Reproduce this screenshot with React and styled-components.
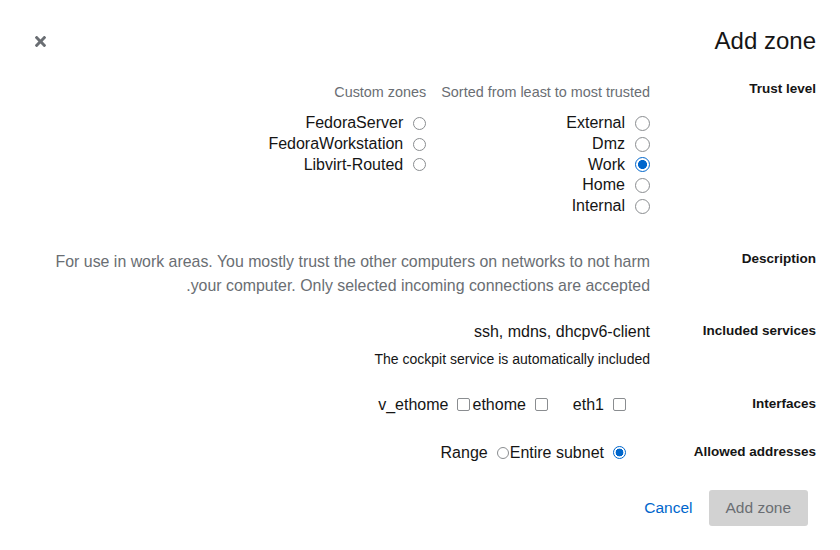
import React from 'react';
import styled, { createGlobalStyle } from 'styled-components';

const GlobalStyle = createGlobalStyle`
  body {
    margin: 0;
    background: #fff;
    font-family: "Liberation Sans", Arial, sans-serif;
    color: #151515;
  }
`;

const Dialog = styled.div`
  direction: rtl;
  width: 840px;
  height: 550px;
  box-sizing: border-box;
  padding: 24px 24px 0 24px;
  display: flex;
  flex-direction: column;
`;

const Header = styled.header`
  display: flex;
  justify-content: space-between;
  align-items: center;
  height: 34px;
`;

const Title = styled.h1`
  margin: 0;
  font-size: 24px;
  font-weight: 400;
  line-height: 34px;
`;

const Close = styled.button`
  border: 0;
  background: none;
  padding: 0;
  margin-left: 11px;
  width: 11px;
  height: 11px;
  display: flex;
  color: #6a6e73;
  cursor: pointer;
`;

const Row = styled.div`
  display: grid;
  grid-template-columns: 150px 1fr;
  column-gap: 16px;
  margin-top: ${p => p.$space}px;
`;

const Label = styled.div`
  font-size: 13.5px;
  font-weight: 700;
  line-height: 18px;
`;

const Content = styled.div`
  padding-top: ${p => p.$shift || 0}px;
`;

const Columns = styled.div`
  display: flex;
  gap: 15px;
`;

const Column = styled.div`
  display: flex;
  flex-direction: column;
`;

const ColumnHead = styled.div`
  font-size: 14.4px;
  line-height: 18px;
  color: #6a6e73;
  margin-bottom: 12px;
`;

const Option = styled.label`
  display: flex;
  align-items: center;
  gap: 10px;
  font-size: 16px;
  line-height: 20.75px;
`;

const Radio = styled.input.attrs({ type: 'radio' })`
  appearance: none;
  margin: 0;
  width: ${p => p.$size || 13}px;
  height: ${p => p.$size || 13}px;
  box-sizing: border-box;
  border-radius: 50%;
  border: 1px solid #8a8d90;
  background: #fff;
  flex: none;
  &:checked {
    border: 1.5px solid #0066cc;
    background: radial-gradient(circle, #0066cc 0 ${p => (p.$size === 15 ? 4.2 : 3.6)}px, #fff ${p => (p.$size === 15 ? 4.8 : 4.2)}px);
  }
`;

const Check = styled.input.attrs({ type: 'checkbox' })`
  appearance: none;
  margin: 0;
  width: 13px;
  height: 13px;
  box-sizing: border-box;
  border-radius: 2px;
  border: 1px solid #8a8d90;
  background: #fff;
  flex: none;
`;

const Inline = styled.div`
  display: flex;
  align-items: center;
`;

const InlineItem = styled.label`
  display: flex;
  align-items: center;
  gap: 9px;
  font-size: 16px;
  line-height: 20px;
  margin-right: ${p => p.$lead}px;
`;

const Description = styled.p`
  margin: 0;
  font-size: 15.9px;
  line-height: 24px;
  color: #6a6e73;
`;

const Services = styled.div`
  font-size: 16px;
  line-height: 20px;
`;

const Helper = styled.div`
  font-size: 14px;
  line-height: 18px;
  margin-top: 8px;
`;

const Footer = styled.footer`
  display: flex;
  align-items: center;
  gap: 16px;
  margin-top: 27px;
  margin-right: 8px;
`;

const Button = styled.button`
  font-family: inherit;
  font-size: 15.5px;
  height: 36px;
  padding: 0 17px;
  border: 0;
  border-radius: 3px;
  background: ${p => (p.$link ? 'none' : '#d2d2d2')};
  color: ${p => (p.$link ? '#0066cc' : '#6a6e73')};
  ${p => p.$link && 'padding: 0;'}
`;

const trusted = ['External', 'Dmz', 'Work', 'Home', 'Internal'];
const custom = ['FedoraServer', 'FedoraWorkstation', 'Libvirt-Routed'];

const App = () => (
  <>
    <GlobalStyle />
    <Dialog>
      <Header>
        <Title>Add zone</Title>
        <Close aria-label="Close">
          <svg width="11" height="11" viewBox="0 80 352 352" fill="currentColor">
            <path d="M242.72 256l100.07-100.07c12.28-12.28 12.28-32.19 0-44.48l-22.24-22.24c-12.28-12.28-32.19-12.28-44.48 0L176 189.28 75.930 89.21c-12.28-12.28-32.19-12.28-44.48 0L9.21 111.45c-12.28 12.28-12.28 32.19 0 44.48L109.28 256 9.21 356.07c-12.28 12.28-12.28 32.19 0 44.48l22.24 22.24c12.28 12.28 32.2 12.28 44.48 0L176 322.72l100.07 100.07c12.28 12.28 32.2 12.28 44.48 0l22.24-22.24c12.28-12.28 12.28-32.19 0-44.48L242.72 256z" />
          </svg>
        </Close>
      </Header>

      <Row $space={22}>
        <Label>Trust level</Label>
        <Content $shift={3}>
          <Columns>
            <Column>
              <ColumnHead>Sorted from least to most trusted</ColumnHead>
              {trusted.map(z => (
                <Option key={z}>
                  <Radio name="zone" $size={15} defaultChecked={z === 'Work'} />
                  {z}
                </Option>
              ))}
            </Column>
            <Column>
              <ColumnHead>Custom zones</ColumnHead>
              {custom.map(z => (
                <Option key={z}>
                  <Radio name="zone" />
                  {z}
                </Option>
              ))}
            </Column>
          </Columns>
        </Content>
      </Row>

      <Row $space={33}>
        <Label>Description</Label>
        <Content>
          <Description>
            For use in work areas. You mostly trust the other computers on networks to not harm
            <br />
            your computer. Only selected incoming connections are accepted.
          </Description>
        </Content>
      </Row>

      <Row $space={24}>
        <Label>Included services</Label>
        <Content>
          <Services>ssh, mdns, dhcpv6-client</Services>
          <Helper>The cockpit service is automatically included</Helper>
        </Content>
      </Row>

      <Row $space={27}>
        <Label>Interfaces</Label>
        <Inline>
          <InlineItem $lead={24}><Check />eth1</InlineItem>
          <InlineItem $lead={25}><Check />ethome</InlineItem>
          <InlineItem $lead={2}><Check />v_ethome</InlineItem>
        </Inline>
      </Row>

      <Row $space={28}>
        <Label>Allowed addresses</Label>
        <Inline>
          <InlineItem $lead={24}><Radio name="addr" defaultChecked />Entire subnet</InlineItem>
          <InlineItem $lead={1}><Radio name="addr" $size={12} />Range</InlineItem>
        </Inline>
      </Row>

      <Footer>
        <Button disabled>Add zone</Button>
        <Button $link>Cancel</Button>
      </Footer>
    </Dialog>
  </>
);

export default App;
